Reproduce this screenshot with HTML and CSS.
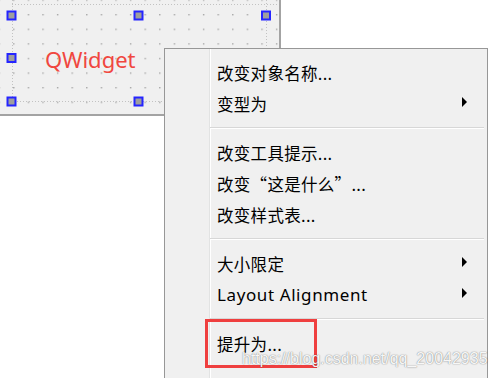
FILE: index.html
```html
<!DOCTYPE html>
<html lang="zh-CN">
<head>
  <meta charset="UTF-8" />
  <meta name="viewport" content="width=device-width, initial-scale=1.0"/>
  <title>提升为...</title>
  <link rel="stylesheet" href="styles.css">
</head>
<body>
  <div class="stage">
    <div class="form-canvas">
      <svg class="canvas-svg" width="282" height="117" viewBox="0 0 282 117">
        <defs>
          <pattern id="grid" x="13.1" y="-0.6" width="14.6" height="14.6" patternUnits="userSpaceOnUse">
            <rect width="1.4" height="1.4" fill="#a6a6a6"/>
          </pattern>
        </defs>
        <rect x="0" y="0" width="280" height="115" fill="#f0f0f0"/>
        <rect x="0" y="0" width="279" height="114" fill="url(#grid)"/>
        <g class="dotted">
          <line x1="12" y1="4.5" x2="279" y2="4.5"/>
          <line x1="11" y1="101.5" x2="266" y2="101.5"/>
          <line x1="12.5" y1="0" x2="12.5" y2="101"/>
          <line x1="266.5" y1="0" x2="266.5" y2="101"/>
        </g>
        <line class="edge" x1="280" y1="0" x2="280" y2="116"/>
        <line class="edge" x1="0" y1="115" x2="281" y2="115"/>
        <text class="widget-label" x="45" y="68">QWidget</text>
        <g class="handles">
          <rect x="7.5" y="11.5" width="8" height="8"/>
          <rect x="134.5" y="11.5" width="8" height="8"/>
          <rect x="262" y="11.5" width="8" height="8"/>
          <rect x="7.5" y="54" width="8" height="8"/>
          <rect x="7.5" y="97.5" width="8" height="8"/>
          <rect x="134.5" y="97.5" width="8" height="8"/>
        </g>
      </svg>
    </div>

    <div class="context-menu">
      <div class="menu-item"><span>改变对象名称...</span></div>
      <div class="menu-item"><span>变型为</span><i class="sub-arrow"></i></div>
      <div class="menu-sep"></div>
      <div class="menu-item"><span>改变工具提示...</span></div>
      <div class="menu-item"><span>改变“这是什么”...</span></div>
      <div class="menu-item"><span>改变样式表...</span></div>
      <div class="menu-sep"></div>
      <div class="menu-item"><span>大小限定</span><i class="sub-arrow"></i></div>
      <div class="menu-item"><span class="latin">Layout Alignment</span><i class="sub-arrow"></i></div>
      <div class="menu-sep"></div>
      <div class="menu-item"><span>提升为...</span></div>
    </div>

    <div class="highlight-box"></div>
    <div class="watermark">https://blog.csdn.net/qq_20042935</div>
  </div>
</body>
</html>
```

FILE: styles.css
```css
html, body {
  margin: 0;
  padding: 0;
  background: #fff;
}
.stage {
  position: relative;
  width: 496px;
  height: 378px;
  overflow: hidden;
  background: #fff;
}
.form-canvas {
  width: 282px;
  height: 117px;
}
.canvas-svg {
  display: block;
}
.dotted line {
  stroke: #c2c2c2;
  stroke-width: 1;
  stroke-dasharray: 1 2;
}
.edge {
  stroke: #a3a3a3;
  stroke-width: 2;
}
.handles rect {
  fill: #9e9e9e;
  stroke: #2424ff;
  stroke-width: 2;
}
.widget-label {
  font-family: "Noto Sans", "Liberation Sans", sans-serif;
  font-size: 22px;
  fill: #f0473f;
}

/* context menu sits over the form */
.context-menu {
  position: absolute;
  left: 164px;
  top: 48px;
  width: 322px;
  padding: 8px 0 40px;
  border: 1px solid #979797;
  background: linear-gradient(to right, #f0f0f0 44px, #e2e3e3 44px 45px, #fff 45px 46px, #f0f0f0 46px);
  font-family: "Noto Sans CJK SC", "Noto Sans", sans-serif;
  font-size: 16.5px;
  letter-spacing: 0.3px;
  color: #000;
}
.menu-item {
  height: 31px;
  display: flex;
  align-items: center;
  justify-content: space-between;
  padding: 0 20px 0 52px;
}
.menu-item .latin {
  font-family: "Noto Sans", "Liberation Sans", sans-serif;
  font-size: 17px;
  letter-spacing: 0.6px;
}
.sub-arrow {
  width: 0;
  height: 0;
  margin-top: -3px;
  border-left: 5px solid #000;
  border-top: 5px solid transparent;
  border-bottom: 5px solid transparent;
}
.menu-sep {
  height: 18px;
  display: flex;
  align-items: center;
  padding: 0 3px 0 45px;
}
.menu-sep::before {
  content: "";
  flex: 1;
  height: 1px;
  background: #d7d7d7;
  border-bottom: 1px solid #fff;
}

.highlight-box {
  position: absolute;
  left: 205px;
  top: 319px;
  width: 112px;
  height: 49px;
  box-sizing: border-box;
  border: 3px solid #ef3f3f;
}
.watermark {
  position: absolute;
  left: 242px;
  top: 350px;
  font-family: "Liberation Sans", Arial, sans-serif;
  font-size: 16px;
  line-height: 18px;
  color: rgba(255, 255, 255, 0.95);
  text-shadow: 0 0 1px rgba(0, 0, 0, 0.45), 0 0 2px rgba(0, 0, 0, 0.2);
  white-space: nowrap;
}
```
